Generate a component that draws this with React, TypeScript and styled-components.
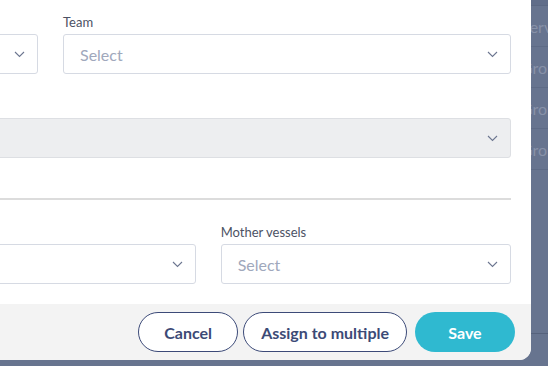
import styled, { createGlobalStyle } from "styled-components";

const GlobalStyle = createGlobalStyle`
  html, body {
    margin: 0;
    padding: 0;
    background: #67748f;
    font-family: Lato, "Liberation Sans", sans-serif;
  }
`;

const Chevron = () => (
  <svg width="11" height="7" viewBox="0 0 11 7">
    <polyline points="1,1 5.5,5.5 10,1" fill="none" stroke="#6c7690" strokeWidth="1.1" />
  </svg>
);

const Field = ({ label, placeholder, disabled }: { label?: string; placeholder?: string; disabled?: boolean }) => (
  <FieldWrap>
    <Label>{label || "\u00a0"}</Label>
    <Select $disabled={disabled}>
      <Placeholder>{placeholder}</Placeholder>
      <Chevron />
    </Select>
  </FieldWrap>
);

const App = () => {
  return (
    <Screen>
      <GlobalStyle />
      <BgTable>
        <BgHead />
        <BgRow>Service</BgRow>
        <BgRow>Group</BgRow>
        <BgRow>Group</BgRow>
        <BgRow>Group</BgRow>
        <BgSpacer />
        <BgPager />
      </BgTable>
      <Modal>
        <Body>
          <Row $cols={2}>
            <Field label="Vessel" placeholder="Select" />
            <Field label="Team" placeholder="Select" />
          </Row>
          <Row $cols={1}>
            <Field label="Port" disabled />
          </Row>
          <Divider />
          <Row $cols={3}>
            <Field label="Type" placeholder="Select" />
            <Field label="Category" />
            <Field label="Mother vessels" placeholder="Select" />
          </Row>
        </Body>
        <Footer>
          <OutlineButton>Cancel</OutlineButton>
          <OutlineButton>Assign to multiple</OutlineButton>
          <SaveButton>Save</SaveButton>
        </Footer>
      </Modal>
    </Screen>
  );
};

export default App;

const Screen = styled.div`
  position: relative;
  width: 548px;
  height: 366px;
  overflow: hidden;
  background: #67748f;
`;

const BgTable = styled.div`
  display: flex;
  flex-direction: column;
  padding-left: 521px;
  height: 100%;
  box-sizing: border-box;
  overflow: hidden;
`;

const BgHead = styled.div`
  height: 5px;
  background: #606d89;
  border-bottom: 1px solid #5b6883;
`;

const BgRow = styled.div`
  height: 40px;
  display: flex;
  align-items: center;
  border-bottom: 1px solid #5e6b86;
  color: #8791a8;
  font-size: 16px;
  white-space: nowrap;
`;

const BgSpacer = styled.div`
  height: 163px;
`;

const BgPager = styled.div`
  border-top: 1px solid #56627c;
  flex: 1;
`;

const Modal = styled.div`
  position: absolute;
  left: -430px;
  top: -26px;
  width: 961px;
  background: #ffffff;
  border-radius: 12px;
  overflow: hidden;
`;

const Body = styled.div`
  padding: 40px 20px 20px;
  display: flex;
  flex-direction: column;
  gap: 24px;
`;

const Row = styled.div<{ $cols: number }>`
  display: grid;
  grid-template-columns: repeat(${(p) => p.$cols}, 1fr);
  column-gap: 25px;
`;

const FieldWrap = styled.div`
  display: flex;
  flex-direction: column;
  gap: 4px;
`;

const Label = styled.div`
  font-size: 13px;
  line-height: 16px;
  color: #4c5264;
`;

const Select = styled.div<{ $disabled?: boolean }>`
  height: 40px;
  box-sizing: border-box;
  border: 1px solid ${(p) => (p.$disabled ? "#dddfe3" : "#d6dae3")};
  background: ${(p) => (p.$disabled ? "#edeef0" : "#ffffff")};
  border-radius: 3px;
  display: flex;
  align-items: center;
  justify-content: space-between;
  padding: 0 12px 0 16px;
`;

const Placeholder = styled.span`
  font-size: 16px;
  color: #a0a8bc;
`;

const Divider = styled.div`
  height: 2px;
  margin-top: 16px;
  background: #dcdcdc;
`;

const Footer = styled.div`
  background: #f3f3f3;
  display: flex;
  justify-content: flex-end;
  align-items: center;
  gap: 5px;
  padding: 8px 16px 8px;
`;

const OutlineButton = styled.button`
  height: 40px;
  min-width: 100px;
  padding: 0 17px;
  border-radius: 20px;
  border: 1px solid #3c4a78;
  background: #ffffff;
  color: #3c4a76;
  font-family: Lato, "Liberation Sans", sans-serif;
  font-weight: 700;
  font-size: 16px;
`;

const SaveButton = styled.button`
  height: 40px;
  width: 100px;
  margin-left: 3px;
  border-radius: 20px;
  border: none;
  background: #2fb9d0;
  color: #ffffff;
  font-family: Lato, "Liberation Sans", sans-serif;
  font-weight: 700;
  font-size: 16px;
`;
